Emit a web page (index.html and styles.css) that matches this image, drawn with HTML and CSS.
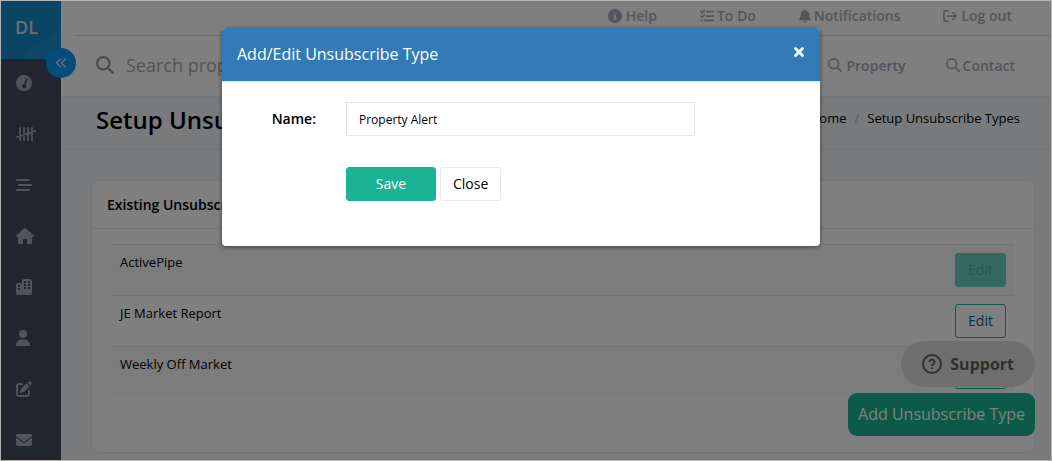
FILE: index.html
```html
<!DOCTYPE html>
<html lang="en">
<head>
  <meta charset="UTF-8" />
  <meta name="viewport" content="width=device-width, initial-scale=1.0"/>
  <title>Setup Unsubscribe Types</title>
  <link rel="stylesheet" href="styles.css">
</head>
<body>
  <svg class="sprite">
    <symbol id="search" viewBox="0 0 512 512"><path d="M416 208c0 45.9-14.9 88.3-40 122.7L502.6 457.4c12.5 12.5 12.5 32.8 0 45.3s-32.8 12.5-45.3 0L330.7 376c-34.4 25.2-76.8 40-122.7 40C93.1 416 0 322.9 0 208S93.1 0 208 0S416 93.1 416 208zM208 352a144 144 0 1 0 0-288 144 144 0 1 0 0 288z"/></symbol>
  </svg>
  <div class="app">
    <nav class="sidebar">
      <a href="#" class="logo">DL</a>
      <a href="#" class="side-link" aria-label="Dashboard">
        <svg class="side-icon" viewBox="0 0 16 16"><path fill-rule="evenodd" d="M8 0a8 8 0 1 1 0 16A8 8 0 0 1 8 0zM11.2 3.2a.7.7 0 0 0-.9.3L8.200 8.900a2.200 2.200 0 1 0 1.500.6l2-5.400a.7.7 0 0 0-.5-.9z"/></svg>
      </a>
      <a href="#" class="side-link" aria-label="Tally">
        <svg class="side-icon wide stroked tally" viewBox="0 0 20 16"><path d="M4 2v12M8 2v12M12 2v12M16 2v12M1 11l18-6"/></svg>
      </a>
      <a href="#" class="side-link" aria-label="Lists">
        <svg class="side-icon stroked" viewBox="0 0 16 16"><path d="M1 3h12M3 8h12M1 13h12"/></svg>
      </a>
      <a href="#" class="side-link" aria-label="Home">
        <svg class="side-icon house" viewBox="0 0 576 512"><path d="M575.8 255.5c0 18-15 32.1-32 32.1h-32l.7 160.2c0 2.7-.2 5.4-.5 8.1V472c0 22.1-17.9 40-40 40H392c-22.1 0-40-17.9-40-40V384c0-17.7-14.3-32-32-32H256c-17.7 0-32 14.3-32 32v88c0 22.1-17.9 40-40 40H104c-22.1 0-40-17.9-40-40V287.6H32c-18 0-32-14-32-32.1c0-9 3-17 10-24L266.4 8c7-7 15-8 22-8s15 2 21 7L564.8 231.5c8 7 12 15 11 24z"/></svg>
      </a>
      <a href="#" class="side-link" aria-label="Buildings">
        <svg class="side-icon" viewBox="0 0 16 16"><path fill-rule="evenodd" d="M8 0h6a2 2 0 0 1 2 2v12a2 2 0 0 1-2 2H2a2 2 0 0 1-2-2V6a2 2 0 0 1 2-2h4V2A2 2 0 0 1 8 0zM8 2v2h2V2zM12 2v2h2V2zM8 5v2h2V5zM12 5v2h2V5zM8 8v2h2V8zM12 8v2h2V8zM2 6v2h2V6zM2 9v2h2V9z"/></svg>
      </a>
      <a href="#" class="side-link" aria-label="People">
        <svg class="side-icon narrow" viewBox="0 0 448 512"><path d="M224 256A128 128 0 1 0 224 0a128 128 0 1 0 0 256zm-45.700 48C79.800 304 0 383.800 0 482.300C0 498.700 13.300 512 29.700 512H418.300c16.400 0 29.700-13.300 29.700-29.700C448 383.800 368.200 304 269.700 304H178.300z"/></svg>
      </a>
      <a href="#" class="side-link" aria-label="Edit">
        <svg class="side-icon" viewBox="0 0 512 512"><path d="M471.600 21.700c-21.900-21.900-57.300-21.900-79.200 0L362.300 51.700l97.900 97.900 30.100-30.100c21.900-21.900 21.900-57.300 0-79.200L471.600 21.700zm-299.200 220c-6.100 6.100-10.800 13.600-13.500 21.900l-29.600 88.800c-2.900 8.600-.6 18.100 5.800 24.600s15.900 8.700 24.600 5.800l88.800-29.600c8.200-2.700 15.700-7.400 21.900-13.500L437.700 172.300 339.700 74.300 172.400 241.700zM96 64C43 64 0 107 0 160V416c0 53 43 96 96 96H352c53 0 96-43 96-96V320c0-17.700-14.300-32-32-32s-32 14.300-32 32v96c0 17.700-14.300 32-32 32H96c-17.700 0-32-14.300-32-32V160c0-17.700 14.300-32 32-32h96c17.700 0 32-14.300 32-32s-14.300-32-32-32H96z"/></svg>
      </a>
      <a href="#" class="side-link" aria-label="Mail">
        <svg class="side-icon" viewBox="0 0 512 512"><path d="M48 64C21.500 64 0 85.500 0 112c0 15.100 7.100 29.300 19.200 38.400L236.800 313.600c11.400 8.500 27 8.500 38.400 0L492.800 150.400c12.100-9.100 19.200-23.300 19.200-38.400c0-26.500-21.500-48-48-48H48zM0 176V384c0 35.300 28.700 64 64 64H448c35.300 0 64-28.700 64-64V176L294.400 339.200c-22.800 17.100-54 17.100-76.800 0L0 176z"/></svg>
      </a>
    </nav>
    <button class="collapse" aria-label="Collapse menu">
      <svg viewBox="0 0 12 12"><path d="M6 1.500L1.500 6L6 10.500M11 1.500L6.500 6L11 10.500"/></svg>
    </button>

    <div class="page">
      <div class="topbar">
        <a href="#" class="top-link"><svg class="icon" viewBox="0 0 512 512"><path d="M256 512A256 256 0 1 0 256 0a256 256 0 1 0 0 512zM216 336h24V272H216c-13.300 0-24-10.700-24-24s10.700-24 24-24h48c13.300 0 24 10.700 24 24v88h8c13.300 0 24 10.700 24 24s-10.700 24-24 24H216c-13.300 0-24-10.700-24-24s10.700-24 24-24zm40-208a32 32 0 1 1 0 64 32 32 0 1 1 0-64z"/></svg>Help</a>
        <a href="#" class="top-link tight"><svg class="icon stroked" viewBox="0 0 16 16"><path d="M7.500 3H15M7.500 8H15M5.500 13H15M1 3l1.500 1.500L5 1.500M1 8l1.500 1.500L5 6.500M1.500 13h1"/></svg>To Do</a>
        <a href="#" class="top-link tight"><svg class="icon bell" viewBox="0 0 448 512"><path d="M224 0c-17.700 0-32 14.300-32 32V51.200C119 66 64 130.600 64 208v18.800c0 47-17.300 92.400-48.500 127.600l-7.400 8.300c-8.400 9.400-10.400 22.900-5.300 34.400S19.400 416 32 416H416c12.600 0 24-7.400 29.200-18.900s3.100-25-5.300-34.400l-7.400-8.300C401.300 319.200 384 273.900 384 226.800V208c0-77.400-55-142-128-156.800V32c0-17.700-14.300-32-32-32zm45.300 493.300c12-12 18.700-28.300 18.700-45.300H160c0 17 6.700 33.300 18.700 45.300s28.300 18.700 45.300 18.700s33.300-6.700 45.300-18.700z"/></svg>Notifications</a>
        <a href="#" class="top-link"><svg class="icon stroked" viewBox="0 0 16 16"><path d="M5.500 2H3.500A2.500 2.500 0 0 0 1 4.500v7A2.500 2.500 0 0 0 3.500 14h2M5.500 8H15M11.500 4L15 8l-3.500 4"/></svg>Log out</a>
      </div>
      <div class="searchbar">
        <label class="search-label" for="search-input" aria-label="Search"><svg class="search-icon"><use href="#search"/></svg></label>
        <input type="text" id="search-input" class="search-input" placeholder="Search property..." />
        <a href="#" class="top-link"><svg class="icon"><use href="#search"/></svg>Property</a>
        <a href="#" class="top-link tight"><svg class="icon"><use href="#search"/></svg>Contact</a>
      </div>
      <div class="heading">
        <h1>Setup Unsubscribe Types</h1>
        <div class="crumbs"><a href="#">Home</a><span>/</span><a href="#">Setup Unsubscribe Types</a></div>
      </div>
      <div class="content">
        <div class="card">
          <h2>Existing Unsubscribe Types</h2>
          <div class="card-body">
            <table>
              <tr><td>ActivePipe</td><td class="action"><button class="edit active">Edit</button></td></tr>
              <tr><td>JE Market Report</td><td class="action"><button class="edit">Edit</button></td></tr>
              <tr><td>Weekly Off Market</td><td class="action"><button class="edit">Edit</button></td></tr>
            </table>
          </div>
        </div>
      </div>
    </div>

    <div class="floating">
      <button class="support">
        <svg viewBox="0 0 20 20"><circle cx="10" cy="10" r="9"/><path d="M7.500 8a2.500 2.500 0 1 1 3.800 2.100c-.9.500-1.300.9-1.300 1.900M10 13.500v1.500"/></svg>
        Support
      </button>
      <button class="add">Add Unsubscribe Type</button>
    </div>

    <div class="backdrop">
      <div class="modal" role="dialog" aria-labelledby="modal-title">
        <div class="modal-header">
          <h3 id="modal-title">Add/Edit Unsubscribe Type</h3>
          <button class="close-x" aria-label="Close dialog"><svg viewBox="0 0 12 12"><path d="M2.500 2.500l7 7M9.500 2.500l-7 7"/></svg></button>
        </div>
        <form class="modal-body">
          <label for="name">Name:</label>
          <input type="text" id="name" class="name-input" value="Property Alert" />
          <div class="buttons">
            <button type="button" class="btn save">Save</button>
            <button type="button" class="btn">Close</button>
          </div>
        </form>
      </div>
    </div>
  </div>
</body>
</html>
```
FILE: styles.css
```css
* {
  margin: 0;
  padding: 0;
  box-sizing: border-box;
}
body,
button,
input {
  font-family: "Open Sans", "Noto Sans", sans-serif;
  font-size: 13px;
  color: #000;
}
a {
  color: inherit;
  text-decoration: none;
}
button {
  cursor: pointer;
}
svg {
  fill: currentColor;
  flex-shrink: 0;
}
.sprite {
  display: none;
}
.stroked {
  fill: none;
  stroke: currentColor;
  stroke-width: 2;
  stroke-linecap: round;
  stroke-linejoin: round;
}
.app {
  position: relative;
  display: flex;
  height: 100vh;
  overflow: hidden;
  border: 1px solid #b4b4b4;
  background: #f3f5f9;
}

/* sidebar */
.sidebar {
  width: 60px;
  flex-shrink: 0;
  background: #404a5e;
  color: #9ea6b7;
}
.logo {
  display: flex;
  align-items: center;
  height: 58px;
  padding: 0 14px 6px;
  background: linear-gradient(145deg, #178acb 70%, #1c8fce 70%);
  color: #ddd;
  font-size: 18px;
  font-weight: 600;
}
.side-link {
  display: flex;
  align-items: center;
  height: 51px;
  padding: 0 0 3px 15px;
}
.side-icon {
  width: 16px;
  height: 16px;
}
.side-icon.wide {
  width: 20px;
}
.side-icon.house {
  width: 18px;
}
.side-icon.narrow {
  width: 14px;
}
.side-icon.tally {
  stroke-width: 1.8;
}
.collapse {
  position: absolute;
  left: 45px;
  top: 47px;
  display: flex;
  align-items: center;
  justify-content: center;
  width: 30px;
  height: 30px;
  border: none;
  border-radius: 50%;
  background: #0a98f5;
}
.collapse svg {
  width: 12px;
  height: 12px;
  fill: none;
  stroke: #ddd;
  stroke-width: 1.3;
}

/* top rows */
.page {
  flex: 1;
  min-width: 0;
}
.topbar {
  display: flex;
  align-items: center;
  justify-content: flex-end;
  gap: 43px;
  height: 35px;
  padding: 0 39px 6px 15px;
  background: linear-gradient(#d8d8d8, #d8d8d8) 15px 100% / 100% 1px no-repeat #fff;
}
.top-link {
  display: flex;
  align-items: center;
  gap: 4px;
  color: #a7abb8;
  font-size: 14px;
  font-weight: 600;
}
.top-link.tight {
  gap: 3px;
}
.icon {
  width: 14px;
  height: 14px;
}
.icon.bell {
  width: 12px;
}
.searchbar {
  display: flex;
  align-items: center;
  height: 61px;
  padding: 0 36px 2px 35px;
  background: #fff;
  border-bottom: 1px solid #e7eaec;
}
.searchbar .top-link {
  margin-left: 40px;
}
.search-label {
  display: flex;
  color: #999;
}
.search-icon {
  width: 18px;
  height: 18px;
}
.search-input {
  flex: 1;
  min-width: 0;
  margin-left: 12px;
  border: none;
  font-size: 18px;
  outline: none;
}
.search-input::placeholder {
  color: #a8a8a8;
}
.heading {
  display: flex;
  align-items: center;
  justify-content: space-between;
  height: 53px;
  padding: 0 31px 7px 35px;
  border-bottom: 1px solid #e7eaec;
  background: linear-gradient(#e7eaec, #e7eaec) 0 47px / 100% 1px no-repeat;
}
h1 {
  font-size: 24px;
  font-weight: 600;
}
.crumbs {
  padding-bottom: 4px;
}
.crumbs span {
  padding: 0 8px;
  color: #bbb;
}

/* card */
.content {
  padding: 30px 16px 30px 30px;
}
.card {
  background: #fff;
  border: 1px solid #e7eaec;
  border-radius: 8px;
}
h2 {
  padding: 14px 15px;
  border-bottom: 1px solid #e7eaec;
  font-size: 14px;
  font-weight: 600;
  line-height: 19px;
}
.card-body {
  padding: 15px 20px 54px;
}
table {
  width: 100%;
  border-collapse: collapse;
}
td {
  height: 51px;
  padding: 8px;
  border-top: 1px solid #e7e7e7;
  line-height: 18px;
  vertical-align: top;
}
tr:nth-child(odd) {
  background: #f9f9f9;
}
.action {
  text-align: right;
}
.edit {
  width: 51px;
  height: 34px;
  padding-bottom: 2px;
  border: 1px solid #1ab394;
  border-radius: 3px;
  background: #fff;
  color: #0a6478;
  font-size: 14px;
}
.edit.active {
  border-color: #68d2be;
  background: #68d2be;
  color: #52aea2;
}

/* floating buttons */
.floating {
  position: absolute;
  right: 16px;
  bottom: 24px;
  display: flex;
  flex-direction: column;
  align-items: flex-end;
  gap: 6px;
}
.support {
  display: flex;
  align-items: center;
  gap: 8px;
  height: 46px;
  padding: 0 21px;
  border: none;
  border-radius: 23px;
  background: #dfdfdf;
  color: #5f5f5f;
  font-size: 16px;
  font-weight: 700;
}
.support svg {
  width: 20px;
  height: 20px;
  fill: none;
  stroke: currentColor;
  stroke-width: 2;
}
.add {
  height: 43px;
  padding: 0 10px 2px;
  border: none;
  border-radius: 9px;
  background: #1ab394;
  color: #fff;
  font-size: 16px;
}

/* modal */
.backdrop {
  position: absolute;
  inset: 0;
  padding: 27px 10px 0 0;
  background: rgba(0, 0, 0, 0.5);
}
.modal {
  max-width: 598px;
  margin: 0 auto;
  overflow: hidden;
  border-radius: 4px;
  background: #fff;
  box-shadow: 0 1px 4px rgba(0, 0, 0, 0.5);
}
.modal-header {
  display: flex;
  align-items: center;
  justify-content: space-between;
  height: 54px;
  padding: 0 15px 2px;
  border-bottom: 1px solid #e5e5e5;
  background: #337ab7;
  color: #fff;
}
h3 {
  font-size: 16px;
  font-weight: 400;
}
.close-x {
  display: flex;
  padding-bottom: 4px;
  border: none;
  background: none;
}
.close-x svg {
  width: 12px;
  height: 12px;
  stroke: #eef5fa;
  stroke-width: 3;
  stroke-linecap: round;
}
.modal-body {
  display: grid;
  grid-template-columns: 94px minmax(0, 349px);
  align-items: center;
  gap: 31px 30px;
  padding: 20px 0 45px;
}
.modal-body label {
  padding-bottom: 2px;
  font-size: 14px;
  font-weight: 600;
  text-align: right;
}
.name-input {
  width: 100%;
  height: 34px;
  padding: 0 12px;
  border: 1px solid #e5e6e7;
  font-size: 12px;
}
.buttons {
  grid-column: 2;
  display: flex;
  gap: 4px;
}
.btn {
  height: 34px;
  padding: 0 12px 2px;
  border: 1px solid #e7eaec;
  border-radius: 3px;
  background: #fff;
  font-size: 14px;
}
.btn.save {
  width: 90px;
  border-color: #1ab394;
  background: #1ab394;
  color: #fff;
}
```
